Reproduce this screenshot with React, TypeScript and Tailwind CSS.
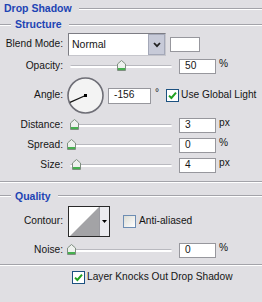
import React from "react";

function Rule({ className = "" }: { className?: string }) {
  return <div className={`h-[2px] border-t border-[#a3a3a9] border-b border-b-white ${className}`} />;
}

function Check() {
  return (
    <svg width="9" height="9" viewBox="0 0 9 9">
      <path d="M1 4.6 L3.4 7 L8 1.6" stroke="#21a121" strokeWidth="2" fill="none" />
    </svg>
  );
}

function Checkbox({ checked, className = "" }: { checked?: boolean; className?: string }) {
  return (
    <div
      className={`w-[13px] h-[13px] shrink-0 border border-[#1c5180] flex items-center justify-center ${
        checked ? "bg-white" : "bg-linear-to-br from-[#dcdcd5] to-white border-[#6d8db3]"
      } ${className}`}
    >
      {checked && <Check />}
    </div>
  );
}

function Thumb() {
  return (
    <svg width="9" height="11" viewBox="0 0 9 11">
      <path d="M0.5 4 L4.5 0.5 L8.5 4 V10.5 H0.5 Z" fill="#eef1ee" stroke="#7f8f80" />
      <rect x="1" y="8" width="7" height="2" fill="#46b04f" />
    </svg>
  );
}

function Slider({ pos }: { pos: number }) {
  return (
    <div className="relative ml-[7px] w-[102px] h-[12px] flex items-center">
      <div className="w-full h-[3px] rounded-full bg-white border-t border-[#b9b9bf]" />
      <div className="absolute top-0" style={{ left: pos }}>
        <Thumb />
      </div>
    </div>
  );
}

function Field({ value, className = "" }: { value: string; className?: string }) {
  return (
    <div className={`h-[15px] bg-white border border-[#97979d] flex items-center pl-[5px] ${className}`}>
      {value}
    </div>
  );
}

function Label({ children }: { children: React.ReactNode }) {
  return <div className="w-[63px] shrink-0 text-right">{children}</div>;
}

function SliderRow({ label, pos, value, unit, h }: { label: string; pos: number; value: string; unit: string; h: string }) {
  return (
    <div className={`flex items-center ${h}`}>
      <Label>{label}</Label>
      <Slider pos={pos} />
      <Field value={value} className="ml-[7px] w-[37px]" />
      <span className="ml-[3px] mb-[4px]">{unit}</span>
    </div>
  );
}

function Dial() {
  const a = (-156 * Math.PI) / 180;
  const x2 = 18.5 + Math.cos(a) * 17;
  const y2 = 18.5 - Math.sin(a) * 17;
  return (
    <svg width="37" height="37" viewBox="0 0 37 37" className="ml-[4px] shrink-0">
      <circle cx="18.5" cy="18.5" r="17.5" fill="#f3f3f3" stroke="#6e6e76" strokeWidth="1.6" />
      <line x1="18.5" y1="18.5" x2={x2} y2={y2} stroke="#111" strokeWidth="1.2" />
      <rect x="17" y="17" width="3" height="3" fill="#000" />
    </svg>
  );
}

export default function App() {
  return (
    <div className="w-[262px] h-[302px] overflow-hidden bg-[#e0dfe3] text-[#151515] text-[10.2px] leading-none font-['Liberation_Sans',Arial,sans-serif]">
      {/* section title */}
      <div className="flex items-center h-[17px]">
        <span className="pl-[4px] font-bold text-[10.5px] text-[#1d44b4]">Drop Shadow</span>
        <Rule className="flex-1 ml-[7px]" />
      </div>
      <div className="flex items-center h-[15px]">
        <Rule className="w-[11px]" />
        <span className="ml-[4px] font-bold text-[10.5px] text-[#1d44b4]">Structure</span>
        <Rule className="flex-1 ml-[7px]" />
      </div>

      {/* blend mode */}
      <div className="flex items-center h-[23px] mt-[1px]">
        <Label>Blend Mode:</Label>
        <div className="ml-[5px] w-[98px] h-[23px] bg-white border border-[#7d7d84] border-r-[#c6c6cc] border-b-[#c6c6cc] flex items-center">
          <span className="pl-[3px] flex-1 text-[10.5px]">Normal</span>
          <div className="w-[17px] h-[21px] bg-[#c7cad8] border border-[#a4a8b8] flex items-center justify-center">
            <svg width="8" height="6" viewBox="0 0 8 6">
              <path d="M1 1 L4 4.2 L7 1" stroke="#222" strokeWidth="1.8" fill="none" />
            </svg>
          </div>
        </div>
        <div className="ml-[4px] w-[30px] h-[15px] bg-white border border-[#97979d]" />
      </div>

      <SliderRow label="Opacity:" pos={47} value="50" unit="%" h="h-[20px]" />

      {/* angle */}
      <div className="flex items-center h-[39px]">
        <Label>Angle:</Label>
        <Dial />
        <Field value="-156" className="ml-[4px] w-[43px] h-[16px]" />
        <span className="ml-[4px] mb-[5px]">°</span>
        <Checkbox checked className="ml-[7px]" />
        <span className="ml-[2px]">Use Global Light</span>
      </div>

      <SliderRow label="Distance:" pos={0} value="3" unit="px" h="h-[20px]" />
      <SliderRow label="Spread:" pos={-3} value="0" unit="%" h="h-[20px]" />
      <SliderRow label="Size:" pos={2} value="4" unit="px" h="h-[20px]" />

      <Rule className="mt-[6px]" />

      <div className="flex items-center h-[18px] mt-[4px]">
        <Rule className="w-[11px]" />
        <span className="ml-[4px] font-bold text-[10.5px] text-[#1d44b4]">Quality</span>
        <Rule className="flex-1 ml-[7px]" />
      </div>

      {/* contour */}
      <div className="flex items-center h-[31px] mt-[1px]">
        <Label>Contour:</Label>
        <div className="ml-[5px] w-[42px] h-[31px] border border-[#2a2a2a] flex bg-[#ebebef]">
          <svg width="30" height="29" viewBox="0 0 30 29" className="shrink-0">
            <rect x="0" y="0" width="30" height="29" fill="#fff" />
            <polygon points="1,29 30,0 30,29" fill="#a3a3a6" />
          </svg>
          <div className="flex-1 border-l border-[#9a9aa0] flex items-center justify-center">
            <svg width="5" height="3" viewBox="0 0 5 3">
              <polygon points="0,0 5,0 2.5,3" fill="#000" />
            </svg>
          </div>
        </div>
        <Checkbox className="ml-[13px]" />
        <span className="ml-[3px]">Anti-aliased</span>
      </div>

      <SliderRow label="Noise:" pos={-3} value="0" unit="%" h="h-[26px]" />

      <Rule className="mt-[1px]" />

      <div className="flex items-center h-[13px] mt-[5px] pl-[72px]">
        <Checkbox checked />
        <span className="ml-[2px]">Layer Knocks Out Drop Shadow</span>
      </div>
    </div>
  );
}
